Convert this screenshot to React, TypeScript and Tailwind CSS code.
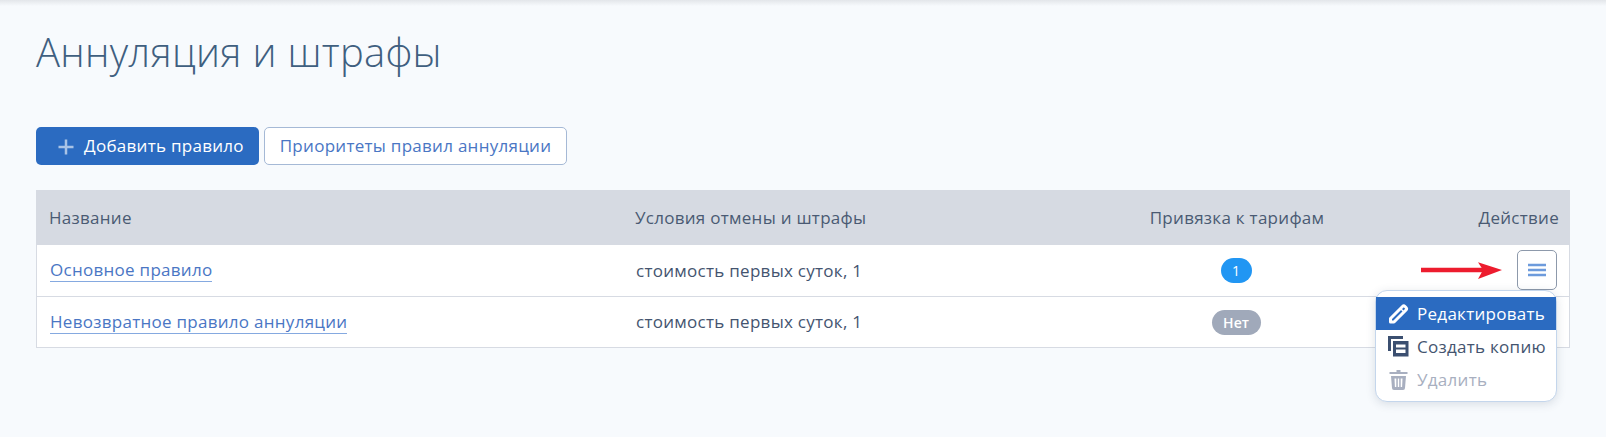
const font = { fontFamily: '"Open Sans", sans-serif' };

function Row({
  name,
  badge,
  last,
}: {
  name: string;
  badge: React.ReactNode;
  last?: boolean;
}) {
  return (
    <div
      className={`grid grid-cols-[586px_500px_1fr] items-center pl-[13px] pr-[13px] bg-white ${last ? "h-[50px]" : "h-[52px] border-b border-[#d7dbe3]"}`}
    >
      <div>
        <a className={`text-[#4a76c4] text-[17px] tracking-[0.28px] leading-[23px] border-b border-[#85a9e0] inline-block ${last ? "" : "mb-[2px]"}`}>
          {name}
        </a>
      </div>
      <div className="text-[#44546f] text-[17px] tracking-[0.28px]">стоимость первых суток, 1</div>
      <div className="grid grid-cols-[1fr_220px] items-center">
        <div className="flex justify-center">{badge}</div>
        <div />
      </div>
    </div>
  );
}

export default function App() {
  return (
    <div
      className="relative w-[1606px] h-[437px] overflow-hidden bg-[#f7fafd] px-[36px] pt-[25px]"
      style={font}
    >
      <div className="absolute top-0 left-0 right-0 h-[6px] bg-gradient-to-b from-[#e3e6ea] to-[#f7fafd]" />

      <h1 className="text-[40px] leading-[54px] font-light text-[#3f5f80] tracking-[0.28px]">
        Аннуляция и штрафы
      </h1>

      <div className="flex gap-[5px] mt-[48px]">
        <button className="flex items-center h-[38px] w-[223px] pl-[21px] rounded-[5px] bg-[#2b6bc1] text-white text-[17px] tracking-[0.28px] whitespace-nowrap">
          <svg width="18" height="18" viewBox="0 0 18 18" className="mr-[9px] mt-px">
            <path d="M9 1.500v15M1.500 9h15" stroke="#a9c3e6" strokeWidth="2.500" />
          </svg>
          Добавить правило
        </button>
        <button className="h-[38px] w-[303px] rounded-[5px] border border-[#a5b9d6] bg-white text-[#4a76c4] text-[17px] tracking-[0.28px] whitespace-nowrap">
          Приоритеты правил аннуляции
        </button>
      </div>

      <div className="mt-[25px] w-[1534px] border-x border-b border-[#d7dbe3]">
        <div className="grid grid-cols-[586px_500px_1fr] items-center h-[55px] -mx-px pl-[13px] pr-[11px] bg-[#d6dae2] text-[#4a5a73] text-[17px] tracking-[0.28px]">
          <div>Название</div>
          <div>Условия отмены и штрафы</div>
          <div className="grid grid-cols-[1fr_220px]">
            <div className="text-center whitespace-nowrap">Привязка к тарифам</div>
            <div className="text-right">Действие</div>
          </div>
        </div>
        <Row
          name="Основное правило"
          badge={
            <span className="flex items-center justify-center w-[31px] h-[25px] rounded-full bg-[#2196f3] text-white text-[14px]">
              1
            </span>
          }
        />
        <Row
          name="Невозвратное правило аннуляции"
          last
          badge={
            <span className="flex items-center justify-center w-[49px] h-[25px] rounded-full bg-[#a0a9ba] text-white text-[14px] font-semibold">
              Нет
            </span>
          }
        />
      </div>

      {/* arrow annotation */}
      <svg width="84" height="20" viewBox="0 0 84 20" className="absolute left-[1421px] top-[260px]">
        <path d="M0 7.700h62v4.600H0z" fill="#ed1c2e" />
        <path d="M57 2.300l24 7.700-24 9 5-9z" fill="#ed1c2e" />
      </svg>

      <button className="absolute left-[1517px] top-[250px] flex items-center justify-center w-[40px] h-[40px] rounded-[5px] border border-[#8d99ab] bg-white">
        <svg width="18" height="14" viewBox="0 0 18 14" fill="#6d9bdc">
          <path d="M0 0.800h18v2.400H0zM0 5.800h18v2.400H0zM0 10.800h18v2.400H0z" />
        </svg>
      </button>

      {/* row actions menu */}
      <div className="absolute left-[1375px] top-[290px] w-[182px] h-[112px] pt-[6px] rounded-[12px] bg-white border border-[#c4d6ec] shadow-[0_2px_10px_rgba(40,60,90,0.15)] text-[17px] tracking-[0.28px]">
        <div className="flex items-center h-[33px] pl-[12px] bg-[#2b6bc1] text-white">
          <svg width="22" height="22" viewBox="0 0 22 22" fill="none" className="mr-[7px]">
            <path
              d="M2.500 15.500L14.500 3.500a1.800 1.800 0 0 1 2.500 0l1 1a1.800 1.800 0 0 1 0 2.500L6 19H2.500z"
              stroke="#fff"
              strokeWidth="3"
              strokeLinejoin="round"
            />
            <path d="M12.500 5.500l4 4" stroke="#fff" strokeWidth="1.500" />
          </svg>
          Редактировать
        </div>
        <div className="flex items-center h-[33px] pl-[12px] text-[#44546f]">
          <svg width="22" height="22" viewBox="0 0 22 22" fill="#3b4f70" className="mr-[7px]">
            <path d="M0 0h15v3H3v12H0z" />
            <path fillRule="evenodd" d="M5 5h15.500v15.500H5zM8 8.500v3h9.500v-3zM8 13.500v3.500h9.500v-3.500z" />
          </svg>
          Создать копию
        </div>
        <div className="flex items-center h-[33px] pl-[12px] text-[#a8afc0]">
          <svg width="22" height="22" viewBox="0 0 22 22" fill="#a8afc0" className="mr-[7px]">
            <path d="M7 1h4v2h7v2H0V3h7z" transform="translate(1.500 0)" />
            <path fillRule="evenodd" d="M3 7h15l-1 12a2 2 0 0 1-2 2H6a2 2 0 0 1-2-2zM6.500 9.500l.4 8.500h1.400V9.500zM9.800 9.500V18h1.400V9.500zM12.700 9.500V18h1.400l.4-8.500z" />
          </svg>
          Удалить
        </div>
      </div>
    </div>
  );
}
